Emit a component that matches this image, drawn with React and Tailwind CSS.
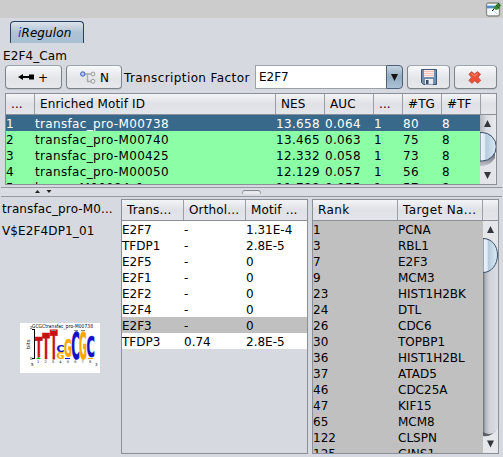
import React from 'react';

const motifs = [
  ['1', 'transfac_pro-M00738', '13.658', '0.064', '1', '80', '8'],
  ['2', 'transfac_pro-M00740', '13.465', '0.063', '1', '75', '8'],
  ['3', 'transfac_pro-M00425', '12.332', '0.058', '1', '73', '8'],
  ['4', 'transfac_pro-M00050', '12.129', '0.057', '1', '56', '8'],
  ['5', 'homer-M00084_1', '11.788', '0.055', '1', '57', '8'],
];

const factors = [
  ['E2F7', '-', '1.31E-4'],
  ['TFDP1', '-', '2.8E-5'],
  ['E2F5', '-', '0'],
  ['E2F1', '-', '0'],
  ['E2F2', '-', '0'],
  ['E2F4', '-', '0'],
  ['E2F3', '-', '0'],
  ['TFDP3', '0.74', '2.8E-5'],
];

const targets = [
  ['1', 'PCNA'],
  ['3', 'RBL1'],
  ['7', 'E2F3'],
  ['9', 'MCM3'],
  ['23', 'HIST1H2BK'],
  ['24', 'DTL'],
  ['26', 'CDC6'],
  ['30', 'TOPBP1'],
  ['36', 'HIST1H2BL'],
  ['37', 'ATAD5'],
  ['46', 'CDC25A'],
  ['47', 'KIF15'],
  ['65', 'MCM8'],
  ['122', 'CLSPN'],
  ['125', 'GINS1'],
];

const button =
  'h-[24px] rounded-[4px] border border-[#7e8289] border-t-[#a0a4ab] bg-linear-to-b from-[#f8f9fa] via-[#e2e4e8] via-60% to-[#e6e8ec] shadow-[0_1px_0_#bfc3ca] flex items-center shrink-0';

function Head({ cols, labels, spacing }) {
  return (
    <div className={`grid h-[21px] shrink-0 border-b border-[#8b8f97] bg-linear-to-b from-[#f3f4f6] via-[#dfe1e6] via-50% to-[#e3e5ea] ${cols} ${spacing}`}>
      {labels.map((label, i) => (
        <div key={i} className="overflow-hidden border-r border-[#9a9ea6] pl-[5px] leading-[20px] last:border-r-0">
          {label}
        </div>
      ))}
    </div>
  );
}

function Row({ cols, cells, tone }) {
  return (
    <div className={`grid h-4 shrink-0 leading-[18px] ${cols} ${tone}`}>
      {cells.map((c, i) => (
        <div key={i}>{c}</div>
      ))}
    </div>
  );
}

function TopScrollbar() {
  return (
    <svg width="16" height="69" viewBox="0 0 16 69" className="shrink-0">
      <defs>
        <linearGradient id="track" x1="0" x2="1">
          <stop offset="0" stopColor="#b3b7be" />
          <stop offset=".4" stopColor="#d9dce2" />
          <stop offset="1" stopColor="#e8eaee" />
        </linearGradient>
        <linearGradient id="thumb" x1="0" x2="1">
          <stop offset="0" stopColor="#f3f7fb" />
          <stop offset=".3" stopColor="#dce8f2" />
          <stop offset=".36" stopColor="#b4cadc" />
          <stop offset="1" stopColor="#dcecf7" />
        </linearGradient>
        <linearGradient id="shade" x1="0" y1="0" x2="0" y2="1">
          <stop offset="0" stopColor="#555a62" />
          <stop offset="1" stopColor="#c0c3c9" />
        </linearGradient>
      </defs>
      <rect width="16" height="69" fill="url(#track)" />
      <path d="M0 42V51C7 51 11 49 15 43V36z" fill="url(#shade)" />
      <path d="M0 51C7 51 12 49 15 44V69H0z" fill="#e2e4e9" />
      <path d="M0 17.5H2A13.5 13.5 0 0 1 2 46H0z" fill="url(#thumb)" stroke="#3c5068" />
      <path d="M4 12h7L7.500 5zM4 57h7L7.500 64z" fill="#33363b" />
    </svg>
  );
}

function TargetScrollbar() {
  return (
    <svg width="15" height="232" viewBox="0 0 15 232" className="shrink-0">
      <defs>
        <linearGradient id="groove" x1="0" x2="1">
          <stop offset="0" stopColor="#676b72" />
          <stop offset=".15" stopColor="#aeb2b9" />
          <stop offset=".4" stopColor="#ced1d7" />
          <stop offset="1" stopColor="#dadde3" />
        </linearGradient>
      </defs>
      <rect width="15" height="232" fill="url(#groove)" />
      <path d="M0 0h15v32L4 17H0z" fill="#e4e6ea" />
      <path d="M0 214C7 216 12 213 15 207V232H0z" fill="#e5e7eb" />
      <path d="M0 211Q8 216 13 209L9 213Q5 216 0 215z" fill="#5d6067" />
      <path d="M0 17.500C9 17.500 14.500 25 14.500 34C14.500 43 9 51.500 0 51.500z" fill="url(#thumb)" stroke="#3c5068" />
      <path d="M4 12h7L7.500 5zM4 219.500h7L7.500 226.500z" fill="#33363b" />
    </svg>
  );
}

function Logo() {
  // letter, left edge, baseline, width, height, colour
  const letters = [
    ['T', 15, 34, 7.7, 19, '#c81010'],
    ['T', 22.2, 36, 7.7, 26, '#c81010'],
    ['T', 30, 36, 7.7, 29, '#c81010'],
    ['C', 36.5, 29, 8, 7, '#1010c8'],
    ['G', 36.5, 36, 8, 6, '#ffa800'],
    ['G', 44, 33.5, 8, 18.5, '#ffa800'],
    ['C', 51.3, 35.500, 8.7, 28, '#1010c8'],
    ['G', 59, 35.500, 8, 28, '#ffa800'],
    ['C', 66.5, 34, 8.5, 22, '#1010c8'],
  ];
  const heights = { T: 0.729, C: 0.757, G: 0.757 };
  return (
    <svg width="80" height="50" viewBox="0 0 80 50" className="ml-5 block bg-white" fontFamily="DejaVu Sans">
      <text x="12" y="5" fontSize="5.5" textLength="61" lengthAdjust="spacingAndGlyphs">GCGCtransfac_pro-M00738</text>
      <path d="M14.500 6V36M12 6.500h3M12 35.500h3" stroke="#000" fill="none" />
      <text x="10" y="6" fontSize="4">2</text>
      <text x="10" y="37" fontSize="4">0</text>
      <text transform="translate(10 26) rotate(-90)" fontSize="5">bits</text>
      {letters.map(([ch, x, y, w, h, fill], i) => (
        <text
          key={i}
          transform={`translate(${x} ${y}) scale(${w / 6.6} ${h / (10 * heights[ch])})`}
          fontSize="10"
          fontWeight="700"
          textLength="6.6"
          lengthAdjust="spacingAndGlyphs"
          fill={fill}
          stroke={fill}
          strokeWidth=".2"
        >
          {ch}
        </text>
      ))}
      <path d="M16 36l2.500-2 2.500 2z" fill="#10b010" />
      <path d="M45 35.500h5" stroke="#1010c8" />
      <path d="M68 35.500h5" stroke="#ffa800" />
      <path d="M31 7.500h5M54 7.500h4M61 7.500h4" stroke="#888" />
      <text x="17" y="39.500" fontSize="3.500" letterSpacing="5.2">12345678</text>
      <text x="11" y="43" fontSize="4">5</text>
      <text x="75" y="43" fontSize="4">3</text>
    </svg>
  );
}

export default function App() {
  const motifCols = 'grid-cols-[29px_241px_49px_49px_29px_39px_39px_1fr]';
  return (
    <div className="flex h-[457px] w-[503px] flex-col overflow-hidden whitespace-pre bg-[#d6d9e0] font-['DejaVu_Sans',sans-serif] text-[12px] text-black">
      <div className="flex h-[18px] shrink-0 justify-end bg-[#cccccc] pr-[2px] pt-[2px]">
        <svg width="16" height="16" viewBox="0 0 16 16">
          <rect x="1.500" y="1" width="13" height="13" rx="2" fill="#f8fbfd" stroke="#8b8c83" strokeWidth="1.300" />
          <path d="M2 3.500h11v3H2z" fill="#79afdf" />
          <path d="M2 5h8" stroke="#286bb5" />
          <path d="M8 8l4 4" stroke="#b8cfe2" />
          <path d="M7 9l3-3" stroke="#222" />
          <path d="M8 6l3-3 2-2 3 2-2 4-3 1z" fill="#3e8b34" />
          <path d="M11 3l3 3M13 1l2 3" stroke="#14511b" />
        </svg>
      </div>

      <div className="flex shrink-0 pl-[10px] pt-[3px]">
        <div className="h-[22px] w-[74px] rounded-t-[4px] border border-b-0 border-[#27405e] bg-linear-to-b from-[#dbe4ec] via-[#afc2d3] via-50% to-[#a8c0d3] pl-[7px] text-[12px] leading-[22px] tracking-[0.1px] italic">
          <span className="text-[#3a20e0]">i</span>Regulon
        </div>
      </div>

      <div className="h-[22px] shrink-0 pl-[3px] pt-[5px] leading-[16px] tracking-[0.12px]">E2F4_Cam</div>

      <div className="flex h-[28px] shrink-0 items-start pl-[5px]">
        <div className={`${button} w-[57px] pl-[12px]`}>
          <svg width="17" height="8" viewBox="0 0 17 8">
            <path d="M0 4l5-3v2h6V1.500h5v5h-5V5H5v2z" fill="#000" />
          </svg>
          <span className="ml-[3px] pt-[2px]">+</span>
        </div>
        <div className={`${button} ml-1 w-[56px] pl-[13px]`}>
          <svg width="16" height="13" viewBox="0 0 16 13" fill="none">
            <path d="M5 3h6M7.500 3v7.500H11" stroke="#a9abad" strokeWidth="1.300" />
            <circle cx="2.800" cy="3" r="2.200" fill="#b9ccfa" stroke="#3455c6" />
            <circle cx="13" cy="3" r="1.900" fill="#eee" stroke="#999" />
            <circle cx="13" cy="10.300" r="1.900" fill="#eee" stroke="#999" />
          </svg>
          <span className="ml-[4px] pt-px">N</span>
        </div>
        <div className="ml-[2px] w-[131px] leading-[26px] tracking-[0.4px]">Transcription Factor</div>
        <div className="flex h-[24px] w-[148px]">
          <div className="flex-1 border border-r-0 border-[#9da1a8] bg-white pl-[3px] leading-[22px]">E2F7</div>
          <div className="flex w-[17px] items-center justify-center rounded-r-[4px] border border-[#4d6178] bg-linear-to-b from-[#c5d4e1] via-[#94abc1] via-50% to-[#adc3d6]">
            <svg width="7" height="7" viewBox="0 0 7 7"><path d="M0 0h7L3.500 7z" fill="#111" /></svg>
          </div>
        </div>
        <div className={`${button} ml-1 w-[43px] justify-center`}>
          <svg width="16" height="16" viewBox="0 0 16 16">
            <path d="M.5.5h15v15h-13l-2-2z" fill="#728fad" stroke="#3c5573" />
            <rect x="3" y="1" width="10" height="7" fill="#fbeeea" />
            <path d="M3 2.500h10M3 4.500h10M3 6.500h10" stroke="#efaea0" strokeWidth=".7" />
            <path d="M4 10h8v5.500H4z" fill="#e7ecf1" />
            <path d="M5 11h2.500v4H5z" fill="#344b68" />
          </svg>
        </div>
        <div className={`${button} ml-1 w-[43px] justify-center`}>
          <svg width="14" height="13" viewBox="0 0 14 13" className="mr-px">
            <path d="M3.500 .7L6.500 3 9.500 .7 12.500 3.200 10 6.200 12.700 9.500 9.800 12.300 6.800 9.800 3.800 12.300 1 9.500 3.500 6.300 1 3.200z" fill="#ee5037" stroke="#c4513c" strokeWidth="1" strokeLinejoin="round" />
            <path d="M3.500 2.500l3 2.500L9.500 2.500" stroke="#ff9b83" fill="none" />
          </svg>
        </div>
      </div>

      <div className="ml-[5px] flex h-[92px] w-[492px] shrink-0 flex-col border border-[#8b8f97]">
        <Head cols={motifCols} spacing="tracking-[0.12px]" labels={['...', 'Enriched Motif ID', 'NES', 'AUC', '...', '#TG', '#TF', '']} />
        <div className="flex h-[69px] overflow-hidden">
          <div className="flex w-[475px] flex-col overflow-hidden tracking-[0.33px]">
            {motifs.map((m, i) => (
              <Row key={i} cols={motifCols} cells={m} tone={i === 0 ? 'bg-[#39698a] text-white' : 'bg-[#8cffa6]'} />
            ))}
          </div>
          <TopScrollbar />
        </div>
      </div>

      <div className="ml-px mt-[2px] flex h-[10px] w-[501px] shrink-0 items-center border-y border-[#9599a1] bg-[#d9dce2] pl-[34px]">
        <svg width="18" height="4" viewBox="0 0 18 4"><path d="M0 3h5L2.500 0zM11.500 0h5L14 3z" fill="#222" /></svg>
        <div className="ml-[189px] h-[4px] w-[19px] rounded-t-[3px] border border-b-0 border-[#a0a4ab] border-t-[#82868e] bg-[#e7e9ed]" />
      </div>

      <div className="flex min-h-0 flex-1 pt-[2px]">
        <div className="flex w-[121px] shrink-0 flex-col tracking-[0.12px]">
          <div className="h-[22px] pl-[2px] pt-[2px] leading-[16px]">transfac_pro-M0...</div>
          <div className="h-[102px] pl-[2px] pt-[2px] leading-[16px]">V$E2F4DP1_01</div>
          <Logo />
        </div>
        <div className="flex h-[255px] w-[187px] shrink-0 flex-col border border-[#8b8f97]">
          <Head cols="grid-cols-[62px_62px_1fr]" spacing="tracking-[0.15px]" labels={['Trans...', 'Orthol...', 'Motif ...']} />
          {factors.map((f, i) => (
            <Row key={i} cols="grid-cols-[62px_62px_1fr]" cells={f} tone={i === 6 ? 'bg-[#c0c0c0]' : 'bg-white'} />
          ))}
        </div>
        <div className="ml-1 flex h-[255px] w-[187px] shrink-0 flex-col border border-[#8b8f97]">
          <Head cols="grid-cols-[85px_85px_1fr]" spacing="tracking-[0.4px]" labels={['Rank', 'Target Na...', '']} />
          <div className="flex h-[232px] overflow-hidden">
            <div className="flex w-[170px] flex-col overflow-hidden">
              {targets.map((t, i) => (
                <Row key={i} cols="grid-cols-[85px_85px]" cells={t} tone="bg-[#c0c0c0]" />
              ))}
            </div>
            <TargetScrollbar />
          </div>
        </div>
      </div>
    </div>
  );
}
